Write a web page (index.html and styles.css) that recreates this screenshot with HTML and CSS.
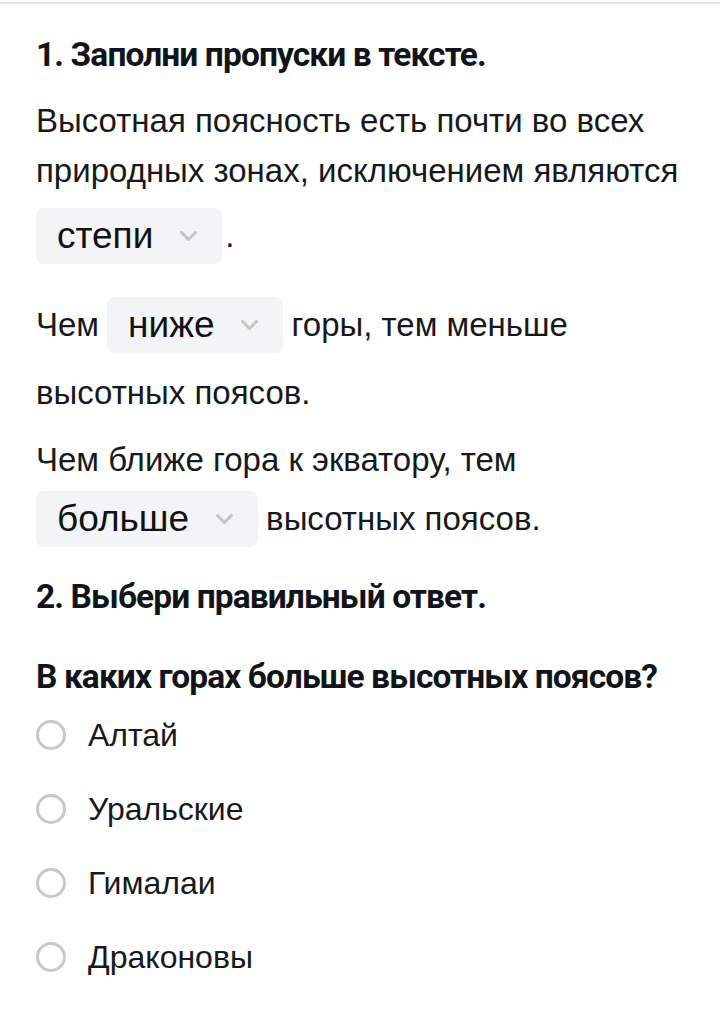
FILE: index.html
```html
<!DOCTYPE html>
<html lang="ru">
<head>
    <meta charset="UTF-8">
    <meta name="viewport" content="width=device-width, initial-scale=1.0">
    <title>Высотная поясность</title>
    <link rel="stylesheet" href="styles.css">
</head>
<body>
    <div class="topline"></div>
    <div class="page">
        <h2 class="task-title first">1. Заполни пропуски в тексте.</h2>

        <div class="line l1">Высотная поясность есть почти во всех</div>
        <div class="line">природных зонах, исключением являются</div>
        <div class="row r1">
            <span class="drop">степи <svg class="chev" width="17" height="10" viewBox="0 0 17 10"><polyline points="1.5,1.5 8.5,8.5 15.5,1.5"/></svg></span>
            <span class="dot">.</span>
        </div>

        <div class="row r2">
            <span>Чем</span>
            <span class="drop">ниже <svg class="chev" width="17" height="10" viewBox="0 0 17 10"><polyline points="1.5,1.5 8.5,8.5 15.5,1.5"/></svg></span>
            <span>горы, тем меньше</span>
        </div>
        <div class="line l2">высотных поясов.</div>

        <div class="line l3">Чем ближе гора к экватору, тем</div>
        <div class="row r3">
            <span class="drop">больше <svg class="chev" width="17" height="10" viewBox="0 0 17 10"><polyline points="1.5,1.5 8.5,8.5 15.5,1.5"/></svg></span>
            <span>высотных поясов.</span>
        </div>

        <h2 class="task-title second">2. Выбери правильный ответ.</h2>
        <h3 class="question">В каких горах больше высотных поясов?</h3>

        <div class="options">
            <label class="option"><span class="radio"></span>Алтай</label>
            <label class="option"><span class="radio"></span>Уральские</label>
            <label class="option"><span class="radio"></span>Гималаи</label>
            <label class="option"><span class="radio"></span>Драконовы</label>
        </div>
    </div>
</body>
</html>
```

FILE: styles.css
```css
body {
    margin: 0;
    padding: 0;
    background: #fff;
    color: #16191c;
    font-family: "Liberation Sans", Arial, sans-serif;
    font-size: 33px;
}
.topline {
    margin-top: 2px;
    height: 2px;
    background: #e4e4e4;
}
.page {
    padding: 0 36px;
}
.task-title, .question {
    font-family: Roboto, "Liberation Sans", sans-serif;
    font-weight: 700;
    font-size: 33.5px;
    letter-spacing: -0.9px;
    line-height: 40px;
    margin: 0;
    color: #111418;
    white-space: nowrap;
}
.task-title.first {
    margin-top: 31px;
}
.task-title.second {
    margin-top: 30px;
}
.question {
    margin-top: 40px;
}
.line {
    line-height: 50px;
}
.l1 {
    margin-top: 21px;
}
.l2 {
    margin-top: 15px;
}
.l3 {
    margin-top: 17px;
}
.row {
    display: flex;
    align-items: center;
    gap: 8px;
    height: 56px;
    line-height: 50px;
}
.r1 {
    margin-top: 12px;
    gap: 3px;
}
.r2 {
    margin-top: 33px;
}
.r3 {
    margin-top: 6px;
}
.drop {
    display: flex;
    align-items: center;
    gap: 27px;
    height: 56px;
    padding: 0 25px 0 21px;
    background: #f3f4f6;
    border-radius: 8px;
    font-size: 37px;
    color: #111;
}
.chev {
    fill: none;
    stroke: #c4c4c4;
    stroke-width: 3;
    stroke-linecap: round;
    stroke-linejoin: round;
}
.options {
    margin-top: 1px;
}
.option {
    display: flex;
    align-items: center;
    gap: 22px;
    height: 74px;
    font-size: 32px;
}
.radio {
    width: 24px;
    height: 24px;
    border: 3px solid #c8c8c8;
    border-radius: 50%;
}
```
